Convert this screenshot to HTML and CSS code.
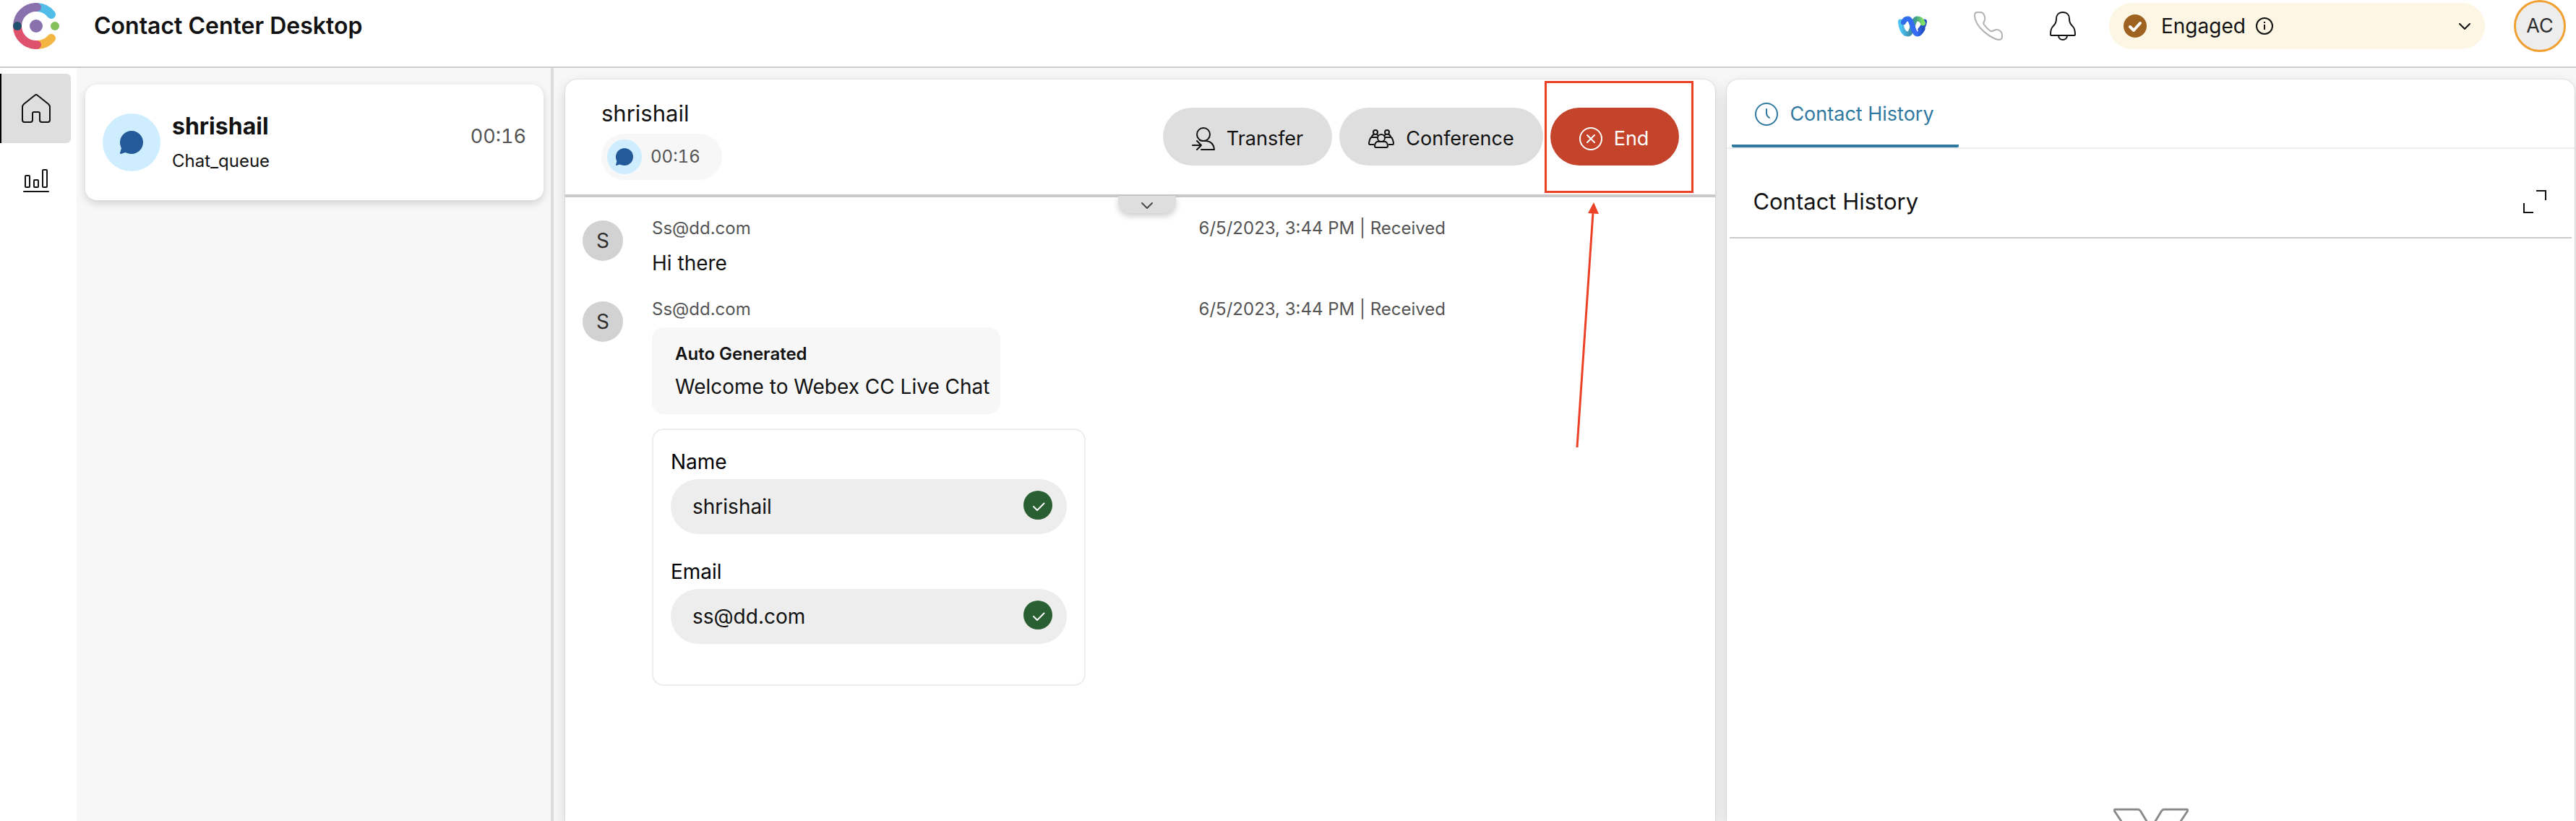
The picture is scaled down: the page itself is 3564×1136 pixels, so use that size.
FILE: index.html
```html
<!DOCTYPE html>
<html lang="en">
<head>
<meta charset="utf-8">
<meta name="viewport" content="width=device-width, initial-scale=1">
<title>Contact Center Desktop</title>
<link rel="stylesheet" href="styles.css">
</head>
<body>
<svg class="defs" aria-hidden="true">
  <symbol id="bubble" viewBox="0 0 32 32"><circle cx="16" cy="16" r="16"/><path d="M0 16L2 24L0 30.500Q0 32 1.500 32L7 30L12 31Z"/></symbol>
  <symbol id="chevron" viewBox="0 0 16 9"><path d="M1 1L8 8L15 1" fill="none" stroke="currentColor" stroke-width="2" stroke-linecap="round" stroke-linejoin="round"/></symbol>
  <symbol id="valid" viewBox="0 0 40 40"><circle cx="20" cy="20" r="20" fill="#2a5f33"/><path d="M14 22L19 27L28.500 17.500" fill="none" stroke="#fff" stroke-width="2" stroke-linecap="round" stroke-linejoin="round"/></symbol>
</svg>

<header class="topbar">
  <svg class="logo" viewBox="0 0 64 64" fill="none" stroke-width="12" stroke-linecap="round" role="img" aria-label="Contact Center">
    <path d="M33 6A26 26 0 0 1 53 16" stroke="#50bde8"/>
    <path d="M53 49A26 26 0 0 1 33 58" stroke="#f4b643"/>
    <path d="M6 32A26 26 0 0 1 33 6" stroke="#8871ad"/>
    <path d="M6 32A26 26 0 0 0 33 58" stroke="#df526e"/>
    <circle cx="6" cy="32" r="6" fill="#20506f"/>
    <circle cx="58" cy="32" r="6" fill="#84bf5b"/>
    <circle cx="32" cy="32" r="9" fill="#8871ad"/>
  </svg>
  <h1 class="title">Contact Center Desktop</h1>
  <div class="tools">
    <button class="tool" aria-label="Webex">
      <svg width="40" height="29" viewBox="0 0 40 29" fill="none" stroke-width="7" stroke-linecap="round">
        <defs>
          <linearGradient id="back" x1="0" y1="0" x2="40" y2="0" gradientUnits="userSpaceOnUse"><stop offset="0.100" stop-color="#4dc3f7"/><stop offset="0.450" stop-color="#3a8ba5"/><stop offset="0.650" stop-color="#46a583"/><stop offset="0.850" stop-color="#7fe065"/></linearGradient>
          <linearGradient id="front" x1="0" y1="0" x2="40" y2="0" gradientUnits="userSpaceOnUse"><stop offset="0.150" stop-color="#2f6de8"/><stop offset="0.650" stop-color="#376cf8"/><stop offset="0.900" stop-color="#1f49b8"/></linearGradient>
        </defs>
        <path d="M31 19C34 16 36 12 36.500 8" stroke="#2450c4"/>
        <path d="M3.500 8C4 16 7 25 13.500 25C20.500 25 20 4 26.500 4C30 4 33 6 34.500 10" stroke="url(#back)"/>
        <path d="M7.500 9C9 5 11 4 13.500 4C20 4 20 25 27 25C30 25 32 22 34 18" stroke="url(#front)"/>
      </svg>
    </button>
    <button class="tool" aria-label="Phone">
      <svg width="40" height="40" viewBox="0 0 40 40" fill="none" stroke="#b2b2b2" stroke-width="2"><path d="M1 5C1 2 3 1 5 1H9C14 1 16 8 15 12C14 14 12 15 14 18C16 21 20 25 23 27C26 28 28 25 32 25C36 25 39 29 39 32V35C39 38 37 39 34 39C24 37 1 22 1 5Z"/></svg>
    </button>
    <button class="tool" aria-label="Notifications">
      <svg width="36" height="40" viewBox="0 0 36 40" fill="none" stroke="#121212" stroke-width="2" stroke-linejoin="round"><path d="M18 1C12 1 9 5 9 10C9 22 1 17 1 31Q1 33 2 33H34Q35 33 35 31C35 17 27 22 27 10C27 5 24 1 18 1Z"/><path d="M12 33C12 41 24 41 24 33"/></svg>
    </button>
  </div>
  <div class="state">
    <svg width="32" height="32" viewBox="0 0 32 32"><circle cx="16" cy="16" r="16" fill="#9f6321"/><path d="M9 17L14 22L23 12" fill="none" stroke="#fff" stroke-width="4" stroke-linecap="round" stroke-linejoin="round"/></svg>
    <select class="state-select" aria-label="Agent state"><option>Engaged</option></select>
    <svg width="24" height="24" viewBox="0 0 24 24" fill="none" stroke="#121212" stroke-width="2"><circle cx="12" cy="12" r="11"/><path d="M12 10V17"/><path d="M12 6V8"/></svg>
    <svg class="state-arrow" width="16" height="9"><use href="#chevron"/></svg>
  </div>
  <button class="profile" aria-label="Profile AC">AC</button>
</header>

<div class="workspace">
  <nav class="rail">
    <a class="rail-item rail-active" href="#home" aria-label="Home">
      <svg width="40" height="40" viewBox="0 0 40 40" fill="none" stroke="#121212" stroke-width="2"><path d="M22 2L37 14Q39 16 39 18V36Q39 39 36 39H28Q25 39 25 36V27Q25 25 23 25H17Q15 25 15 27V36Q15 39 12 39H4Q1 39 1 36V18Q1 16 3 14L18 2Q20 0 22 2Z"/></svg>
    </a>
    <a class="rail-item" href="#reports" aria-label="Reports">
      <svg width="36" height="32" viewBox="0 0 36 32" fill="none" stroke="#121212" stroke-width="2" stroke-linecap="round"><rect x="3" y="9" width="6" height="16" rx="1"/><rect x="15" y="15" width="6" height="10" rx="1"/><rect x="27" y="1" width="6" height="24" rx="1"/><path d="M1 31H35"/></svg>
    </a>
  </nav>

  <aside class="tasks">
    <article class="task">
      <span class="channel channel-large"><svg width="32" height="32"><use href="#bubble"/></svg></span>
      <div class="task-text">
        <h2 class="task-name">shrishail</h2>
        <p class="task-queue">Chat_queue</p>
      </div>
      <time class="task-time">00:16</time>
    </article>
  </aside>

  <div class="panels">
    <main class="panel">
      <header class="contact">
        <div>
          <h2 class="contact-name">shrishail</h2>
          <div class="timer">
            <span class="channel"><svg width="24" height="24"><use href="#bubble"/></svg></span>
            <time>00:16</time>
          </div>
        </div>
        <div class="actions">
          <button class="action">
            <svg width="32" height="32" viewBox="0 0 32 32" fill="none" stroke="currentColor" stroke-width="2" stroke-linecap="round" stroke-linejoin="round"><circle cx="16" cy="10" r="9"/><path d="M11 18Q13 19.500 20 19Q30 20 31 31H13M1 25H13M7 19L13 25L7 31"/></svg>
            Transfer
          </button>
          <button class="action">
            <svg width="36" height="26" viewBox="0 0 36 26" fill="none" stroke="currentColor" stroke-width="2" stroke-linejoin="round"><circle cx="10" cy="4" r="3"/><circle cx="26" cy="4" r="3"/><circle cx="18" cy="12" r="5"/><path d="M12 17Q9 19 9 23Q9 25 11 25H25Q27 25 27 23Q27 19 24 17ZM8 21H2Q1 21 1 19Q2 13 4 11H13M8 7Q5 8 5 11M12 7L14 9M28 21H34Q35 21 35 19Q34 13 32 11H23M28 7Q31 8 31 11M24 7L22 9"/></svg>
            Conference
          </button>
          <div class="end-wrap">
            <button class="action action-end">
              <svg width="32" height="32" viewBox="0 0 32 32" fill="none" stroke="currentColor" stroke-width="2" stroke-linecap="round"><circle cx="16" cy="16" r="15"/><path d="M11 11L21 21M21 11L11 21"/></svg>
              End
            </button>
            <svg class="callout" width="206" height="508" viewBox="0 0 206 508" aria-hidden="true"><rect x="1.500" y="1.500" width="203" height="152" fill="none" stroke="#ec4127" stroke-width="3"/><path d="M45 507L67 182" stroke="#ec4127" stroke-width="3"/><path d="M68 168L75 184L60 183Z" fill="#ec4127"/></svg>
          </div>
        </div>
        <button class="collapse" aria-label="Expand contact details"><svg width="16" height="9"><use href="#chevron"/></svg></button>
      </header>

      <section class="messages" aria-label="Messages">
        <article class="message">
          <span class="avatar">S</span>
          <div>
            <div class="message-head"><span>Ss@dd.com</span><time>6/5/2023, 3:44 PM | Received</time></div>
            <p class="message-body">Hi there</p>
          </div>
        </article>
        <article class="message">
          <span class="avatar">S</span>
          <div>
            <div class="message-head"><span>Ss@dd.com</span><time>6/5/2023, 3:44 PM | Received</time></div>
            <div class="auto">
              <strong class="auto-title">Auto Generated</strong>
              <p>Welcome to Webex CC Live Chat</p>
            </div>
            <form class="details">
              <div class="field">
                <label for="name">Name</label>
                <div class="control"><input id="name" type="text" value="shrishail" readonly><svg class="valid" width="40" height="40"><use href="#valid"/></svg></div>
              </div>
              <div class="field">
                <label for="email">Email</label>
                <div class="control"><input id="email" type="text" value="ss@dd.com" readonly><svg class="valid" width="40" height="40"><use href="#valid"/></svg></div>
              </div>
            </form>
          </div>
        </article>
      </section>
    </main>

    <aside class="panel history">
      <div class="tabs" role="tablist">
        <button class="tab" role="tab" aria-selected="true">
          <svg width="32" height="32" viewBox="0 0 32 32" fill="none" stroke="currentColor" stroke-width="2" stroke-linecap="round"><circle cx="16" cy="16" r="15"/><path d="M16 9V15Q16 18 20 21"/></svg>
          Contact History
        </button>
      </div>
      <div class="history-head">
        <h2 class="history-title">Contact History</h2>
        <button class="tool" aria-label="Expand"><svg width="32" height="32" viewBox="0 0 32 32" fill="none" stroke="#121212" stroke-width="2"><path d="M18 1H31V14M1 18V31H14"/></svg></button>
      </div>
      <div class="empty">
        <svg width="104" height="18" viewBox="0 0 104 18" fill="none" stroke="#8c8c8c" stroke-width="3" stroke-linejoin="round"><path d="M12 20L2 5Q0 2 3 2H34Q36 2 38 5L47 20M57 20L66 5Q68 2 70 2H101Q104 2 102 5L92 20"/></svg>
      </div>
    </aside>
  </div>
</div>
</body>
</html>
```

FILE: styles.css
```css
* { box-sizing: border-box; }

body {
  margin: 0;
  height: 100vh;
  overflow: hidden;
  display: flex;
  flex-direction: column;
  background: #fff;
  color: #121212;
  font: 400 28px/32px Inter, "Liberation Sans", sans-serif;
}

h1, h2, p { margin: 0; font-weight: 400; }
button, input, select { font: inherit; color: inherit; }
button { border: 0; padding: 0; background: none; cursor: pointer; }
svg { display: block; flex: none; }
.defs { position: absolute; width: 0; height: 0; }

/* Top bar */
.topbar {
  display: flex;
  align-items: center;
  padding: 0 14px 20px 18px;
  border-bottom: 2px solid #ccc;
}
.logo { width: 64px; height: 64px; }
.title { margin-left: 48px; font-size: 32px; font-weight: 600; }
.tools { display: flex; align-items: center; gap: 65px; margin-left: auto; }
.state {
  display: flex;
  align-items: center;
  width: 520px;
  height: 64px;
  margin: 0 40px 0 46px;
  padding: 0 20px;
  border-radius: 32px;
  background: #fef6e4;
}
.state-select {
  appearance: none;
  width: 131px;
  margin-left: 20px;
  padding: 0;
  border: 0;
  background: none;
}
.state-arrow { margin-left: auto; }
.profile {
  width: 72px;
  height: 72px;
  border: 3px solid #f0a134;
  border-radius: 50%;
  background: #ededed;
  color: #2e2e2e;
  font-size: 27px;
}

/* Layout */
.workspace {
  flex: 1;
  min-height: 0;
  display: grid;
  grid-template-columns: 106px 660px 1fr;
}
.rail { padding-top: 8px; }
.rail-item {
  display: flex;
  align-items: center;
  justify-content: center;
  width: 98px;
  height: 96px;
  margin-bottom: 4px;
  padding-left: 2px;
}
.rail-active {
  padding-left: 0;
  border-left: 2px solid #000;
  border-radius: 0 6px 6px 0;
  background: #dedede;
}
.tasks {
  padding: 23px 10px 0 12px;
  border-right: 4px solid #dcdcdc;
  background: #f7f7f7;
}
.panels {
  display: grid;
  grid-template-columns: 19fr 14fr;
  gap: 16px;
  min-height: 0;
  padding: 16px 2px 0 16px;
  overflow: hidden;
  background: #f7f7f7;
}
.panel {
  min-width: 0;
  border-radius: 16px 16px 0 0;
  background: #fff;
  box-shadow: 0 8px 20px rgba(0, 0, 0, 0.14), 0 0 2px rgba(0, 0, 0, 0.2);
}

/* Task card */
.task {
  display: flex;
  align-items: center;
  height: 160px;
  padding: 0 24px;
  border-radius: 16px;
  background: #fff;
  box-shadow: 0 4px 12px rgba(0, 0, 0, 0.16);
}
.channel {
  display: grid;
  place-items: center;
  width: 48px;
  height: 48px;
  border-radius: 50%;
  background: #ceeeff;
  fill: #245a99;
}
.channel-large { width: 80px; height: 80px; }
.task-text { display: grid; gap: 12px; margin-left: 16px; }
.task-name { font-size: 32px; font-weight: 700; line-height: 40px; }
.task-queue { font-size: 24px; }
.task-time {
  margin-left: auto;
  padding-bottom: 16px;
  color: #545454;
  font-size: 27px;
  font-variant-numeric: tabular-nums;
}

/* Contact header */
.contact {
  position: relative;
  display: flex;
  align-items: flex-start;
  justify-content: space-between;
  padding: 27px 50px 20px;
  border-bottom: 4px solid #c9c9c9;
}
.contact-name { font-size: 31px; line-height: 40px; }
.timer {
  display: flex;
  align-items: center;
  gap: 12px;
  width: fit-content;
  height: 64px;
  margin-top: 8px;
  padding: 0 30px 0 8px;
  border-radius: 32px;
  background: #f7f7f7;
  color: #545454;
  font-size: 24px;
  font-variant-numeric: tabular-nums;
}
.actions { display: flex; gap: 10px; margin-top: 12px; }
.action {
  display: flex;
  align-items: center;
  gap: 16px;
  height: 80px;
  padding: 6px 40px 0;
  border-radius: 40px;
  background: #dedede;
  font-size: 27px;
}
.action-end { padding-right: 42px; background: #c4432b; color: #fff; }
.end-wrap { position: relative; }
.callout {
  position: absolute;
  top: -37px;
  left: -8px;
  z-index: 1;
  pointer-events: none;
}
.collapse {
  position: absolute;
  top: calc(100% + 2px);
  left: 50%;
  display: grid;
  place-items: center;
  width: 80px;
  height: 24px;
  margin-left: -31px;
  padding-top: 3px;
  border-radius: 0 0 16px 16px;
  background: #dedede;
  color: #4a4a4a;
  box-shadow: 0 4px 8px rgba(0, 0, 0, 0.2);
}

/* Messages */
.messages { display: grid; gap: 32px; padding: 27px 27px 0 24px; }
.message { display: grid; grid-template-columns: 56px 1fr; gap: 40px; align-items: start; }
.avatar {
  display: grid;
  place-items: center;
  height: 56px;
  margin-top: 5px;
  border-radius: 50%;
  background: #d2d2d2;
  color: #2e2e2e;
}
.message-head {
  display: grid;
  grid-template-columns: 11fr 10fr;
  color: #545454;
  font-size: 24px;
}
.message-body { margin-top: 16px; }
.auto {
  display: grid;
  gap: 13px;
  width: fit-content;
  margin-top: 9px;
  padding: 21px 14px 22px 32px;
  border-radius: 16px;
  background: #f7f7f7;
}
.auto-title { font-size: 24px; font-weight: 600; }
.details {
  display: grid;
  gap: 36px;
  width: 600px;
  margin-top: 20px;
  padding: 28px 24px 56px;
  border: 2px solid #ededed;
  border-radius: 16px;
}
.field { display: grid; gap: 8px; color: #000; }
.control { position: relative; }
.control input {
  display: block;
  width: 100%;
  height: 76px;
  padding: 0 80px 0 30px;
  border: 0;
  border-radius: 38px;
  background: #ededed;
  color: #121212;
}
.valid { position: absolute; top: 16px; right: 20px; }

/* Contact history */
.history { display: flex; flex-direction: column; }
.tabs { padding-left: 7px; border-bottom: 2px solid #ededed; }
.tab {
  display: flex;
  align-items: center;
  gap: 16px;
  height: 94px;
  padding: 6px 34px 0 32px;
  border-bottom: 4px solid #3079a0;
  border-radius: 2px;
  color: #3079a0;
  font-size: 27px;
}
.history-head {
  display: flex;
  align-items: center;
  justify-content: space-between;
  height: 124px;
  margin: 0 4px;
  padding: 24px 35px 0 32px;
  border-bottom: 2px solid #ccc;
}
.history-title { font-size: 31px; }
.empty {
  flex: 1;
  display: flex;
  align-items: flex-end;
  justify-content: center;
}
```
